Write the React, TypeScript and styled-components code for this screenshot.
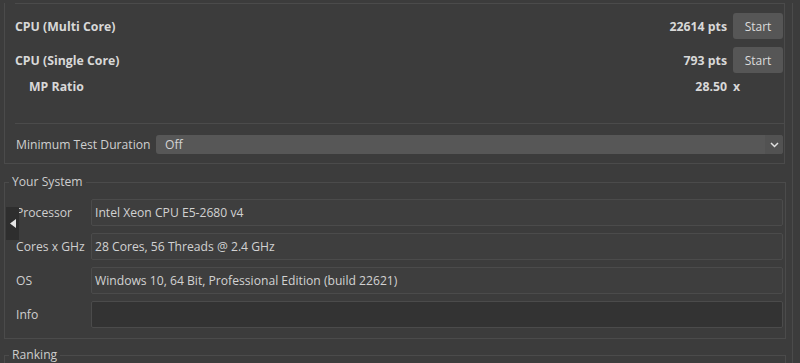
import * as React from 'react';
import styled, { createGlobalStyle } from 'styled-components';

const GlobalStyle = createGlobalStyle`
  html, body {
    margin: 0;
    padding: 0;
    background: #3c3c3c;
    overflow: hidden;
  }
  body {
    font-family: 'Open Sans', 'Noto Sans', sans-serif;
    font-size: 12.15px;
    color: #cfcfcf;
  }
`;

const line = '#4b4b4b';

const Window = styled.div`
  position: relative;
  width: 793px;
  min-height: 100vh;
  box-sizing: border-box;
  border-right: 1px solid ${line};
`;

const TopPanel = styled.div`
  margin-left: 4px;
  width: 781px;
  box-sizing: border-box;
  border: 1px solid ${line};
  border-top: none;
  padding-bottom: 9px;
`;

const ScoreBox = styled.div`
  margin-left: 10px;
  border-top: 1px solid ${line};
  border-bottom: 1px solid ${line};
  margin-top: 3px;
  padding: 9px 1px 24px 0;
  display: flex;
  flex-direction: column;
  gap: 8px;
`;

const ScoreRow = styled.div<{ $indent?: boolean; $tight?: boolean }>`
  display: grid;
  grid-template-columns: 1fr auto 50px;
  column-gap: 6px;
  align-items: center;
  height: 26px;
  margin-top: ${p => (p.$tight ? '-8px' : '0')};
  padding-left: ${p => (p.$indent ? '14px' : '0')};
  font-weight: 700;
  font-size: 12.3px;
  color: #d8d8d8;
`;

const Score = styled.span`
  text-align: right;
`;

const StartButton = styled.button`
  height: 26px;
  width: 50px;
  border: none;
  border-radius: 3px;
  background: #565656;
  color: #dcdcdc;
  font-family: inherit;
  font-size: 12px;
  padding: 0;
`;

const OptionRow = styled.div`
  display: flex;
  align-items: center;
  margin-top: 11px;
  padding: 0 1px 0 11px;
`;

const OptionLabel = styled.span`
  width: 140px;
  flex: none;
`;

const Select = styled.div`
  flex: 1;
  height: 19px;
  display: flex;
  align-items: center;
  justify-content: space-between;
  background: #575757;
  border-radius: 3px;
  padding-left: 9px;
  color: #d4d4d4;
`;

const Caret = styled.span`
  width: 18px;
  height: 19px;
  display: flex;
  align-items: center;
  justify-content: center;
  background: #525252;
  border-radius: 0 3px 3px 0;
`;

const Group = styled.fieldset<{ $gap: number }>`
  margin: ${p => p.$gap}px 0 0 4px;
  width: 782px;
  box-sizing: border-box;
  border: 1px solid ${line};
  padding: 0 2px 10px 0;
  min-width: 0;
`;

const Legend = styled.legend`
  margin-left: 4px;
  padding: 0 3px;
  line-height: 16px;
  color: #cdcdcd;
`;

const Fields = styled.div`
  display: flex;
  flex-direction: column;
  gap: 7px;
  margin-top: 9px;
`;

const FieldRow = styled.div`
  display: grid;
  grid-template-columns: 75px 1fr;
  align-items: center;
  padding-left: 11px;
`;

const FieldValue = styled.div<{ $dark?: boolean }>`
  height: 27px;
  box-sizing: border-box;
  border: 1px solid ${line};
  border-radius: 2px;
  background: ${p => (p.$dark ? '#333333' : '#3e3e3e')};
  display: flex;
  align-items: center;
  padding-left: 3px;
  color: #d2d2d2;
`;

const CollapseTab = styled.div`
  position: absolute;
  left: 6px;
  top: 204px;
  width: 13px;
  height: 33px;
  background: #2e2e2e;
  display: flex;
  align-items: center;
  justify-content: center;
`;

const scores = [
  { label: 'CPU (Multi Core)', value: '22614 pts' },
  { label: 'CPU (Single Core)', value: '793 pts' },
];

const system = [
  { label: 'Processor', value: 'Intel Xeon CPU E5-2680 v4' },
  { label: 'Cores x GHz', value: '28 Cores, 56 Threads @ 2.4 GHz' },
  { label: 'OS', value: 'Windows 10, 64 Bit, Professional Edition (build 22621)' },
  { label: 'Info', value: '', dark: true },
];

export default function App() {
  return (
    <Window>
      <GlobalStyle />
      <TopPanel>
        <ScoreBox>
          {scores.map(s => (
            <ScoreRow key={s.label}>
              <span>{s.label}</span>
              <Score>{s.value}</Score>
              <StartButton>Start</StartButton>
            </ScoreRow>
          ))}
          <ScoreRow $indent $tight>
            <span>MP Ratio</span>
            <Score>28.50</Score>
            <span>x</span>
          </ScoreRow>
        </ScoreBox>
        <OptionRow>
          <OptionLabel>Minimum Test Duration</OptionLabel>
          <Select>
            <span>Off</span>
            <Caret>
              <svg width="9" height="6" viewBox="0 0 9 6">
                <path d="M1 1l3.5 3.5L8 1" fill="none" stroke="#e0e0e0" strokeWidth="1.5" />
              </svg>
            </Caret>
          </Select>
        </OptionRow>
      </TopPanel>

      <Group $gap={10}>
        <Legend>Your System</Legend>
        <Fields>
          {system.map(f => (
            <FieldRow key={f.label}>
              <span>{f.label}</span>
              <FieldValue $dark={f.dark}>{f.value}</FieldValue>
            </FieldRow>
          ))}
        </Fields>
      </Group>

      <Group $gap={8}>
        <Legend>Ranking</Legend>
      </Group>

      <CollapseTab>
        <svg width="6" height="9" viewBox="0 0 6 9">
          <path d="M6 0v9L0 4.5z" fill="#e6e6e6" />
        </svg>
      </CollapseTab>
    </Window>
  );
}
